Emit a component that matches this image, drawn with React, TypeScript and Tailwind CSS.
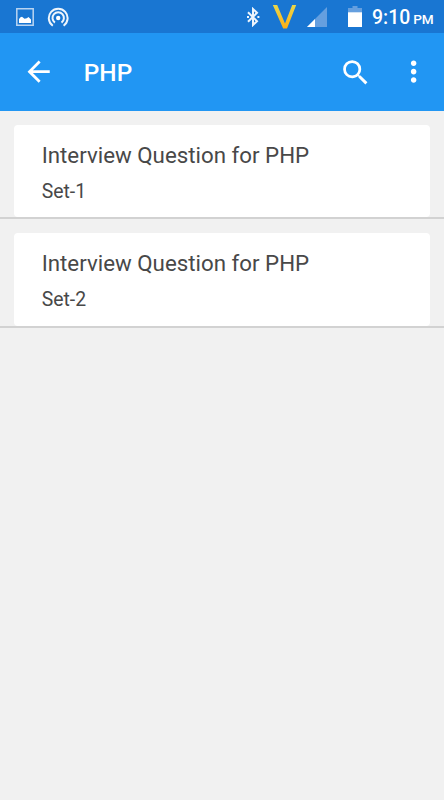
import { MdArrowBack, MdMoreVert, MdSearch } from "react-icons/md";

const sets = [
  { title: "Interview Question for PHP", subtitle: "Set-1" },
  { title: "Interview Question for PHP", subtitle: "Set-2" },
];

function StatusBar() {
  return (
    <div className="flex h-[33px] items-center bg-[#1976d2] text-white">
      <svg viewBox="0 0 18 18" className="ml-4 h-[18px] w-[18px]">
        <path d="M.8 .8h16.4v16.4H.8z" fill="none" stroke="#b9d4f1" strokeWidth="1.5" />
        <path d="M3 15v-4l1.5-1.8L6 8.8l2.5 2 2.3-.5 1.7-1.2 2.5 2.4V15z" fill="#fff" />
      </svg>
      <svg viewBox="0 0 22 20" className="ml-[13px] h-5 w-[22px]" fill="none" stroke="#eef5fc" strokeWidth="2">
        <circle cx="11.2" cy="11" r="2.2" fill="#fff" stroke="none" />
        <path d="M7.9 15.6a5.7 5.7 0 1 1 6.6 0" />
        <path d="M5.8 18.8a9.4 9.4 0 1 1 10.8 0" />
      </svg>
      <svg viewBox="0 0 14 20" className="ml-[177px] h-5 w-[14px]" fill="none" stroke="#eef5fc" strokeWidth="2">
        <path d="M2 5.3 11 14.2 7 18V2l4 3.8-9 8.9" />
        <path d="M1 10h2M11.4 10h2" strokeWidth="2" />
      </svg>
      <svg viewBox="0 0 26 26" className="ml-[12px] h-[26px] w-[26px]">
        <defs>
          <linearGradient id="gold" x1="0" y1="0" x2="0" y2="1">
            <stop offset="0" stopColor="#e9d84b" />
            <stop offset="1" stopColor="#ffae12" />
          </linearGradient>
        </defs>
        <path d="M.8 1h4.4l7.8 18.5L20.2 1h4L15 24.5h-3.8z" fill="url(#gold)" />
      </svg>
      <svg viewBox="0 0 20 20" className="ml-[9px] h-5 w-5">
        <path d="M0 20 20 0v20z" fill="#659fdf" />
        <path d="M0 20 8 12v8z" fill="#fff" />
      </svg>
      <svg viewBox="0 0 14 21" className="ml-[21px] h-[21px] w-[14px]">
        <path d="M4.5 0h5v2H14v5H0V2h4.5z" fill="#659fdf" />
        <path d="M0 6.3h14V21H0z" fill="#fff" />
      </svg>
      <div className="ml-[10px] flex items-baseline pt-[3px] font-medium whitespace-nowrap">
        <span className="text-[19.4px] leading-6">9:10</span>
        <span className="ml-[3px] text-[13.6px] leading-6">PM</span>
      </div>
    </div>
  );
}

function AppBar() {
  return (
    <header className="flex h-[78px] items-center bg-[#2196f3] text-white">
      <MdArrowBack className="ml-[22px] size-[33.3px]" />
      <h1 className="ml-[28.5px] pt-[3px] text-[24.4px] font-medium">PHP</h1>
      <MdSearch className="mt-px ml-auto size-[33.3px]" />
      <MdMoreVert className="mr-[14px] ml-[24px] size-[33.3px]" />
    </header>
  );
}

export default function App() {
  return (
    <div className="min-h-screen bg-[#f1f1f1] font-['Roboto',sans-serif]">
      <StatusBar />
      <AppBar />
      <ul>
        {sets.map((set) => (
          <li key={set.subtitle} className="h-[108.3px] border-b-2 border-[#d2d2d2] px-[14px] pt-[14px]">
            <div className="h-[92.3px] rounded-[4px] bg-white pt-[15px] pl-[27.7px] text-[#484848]">
              <p className="text-[22.3px] leading-[30px]">{set.title}</p>
              <p className="mt-[10px] text-[19.4px] leading-6">{set.subtitle}</p>
            </div>
          </li>
        ))}
      </ul>
    </div>
  );
}
